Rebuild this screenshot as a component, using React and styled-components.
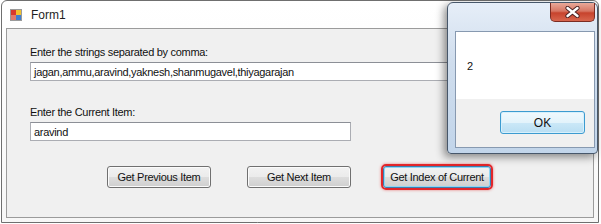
import styled, { createGlobalStyle } from "styled-components";

const GlobalStyle = createGlobalStyle`
  html, body {
    margin: 0;
    padding: 0;
    background: #ffffff;
  }
  body {
    width: 601px;
    height: 224px;
    overflow: hidden;
    font-family: "Liberation Sans", Arial, sans-serif;
  }
`;

const Screen = styled.div`
  position: relative;
  width: 601px;
  height: 224px;
  padding: 0 0 0 1px;
  box-sizing: border-box;
`;

const Window = styled.div`
  width: 598px;
  height: 223px;
  box-sizing: border-box;
  border: 1px solid #6f6f6f;
  border-radius: 6px 6px 0 0;
  background: linear-gradient(#ffffff, #f7f7f7);
  display: flex;
  flex-direction: column;
`;

const TitleBar = styled.div`
  height: 27px;
  display: flex;
  align-items: center;
  gap: 9px;
  padding-left: 8px;
  font-size: 12px;
  color: #1e1e1e;
`;

const Client = styled.div`
  flex: 1;
  margin: 0 4px 4px 4px;
  border: 1px solid #9b9b9b;
  background: #f0f0f0;
  padding: 16px 0 0 23px;
  display: flex;
  flex-direction: column;
  font-size: 11px;
  letter-spacing: -0.3px;
  color: #111;
`;

const Label = styled.div`
  line-height: 15px;
  margin-top: ${(p) => p.$top || 0}px;
`;

const TextBox = styled.div`
  width: ${(p) => p.$width}px;
  height: 19px;
  box-sizing: border-box;
  margin-top: 2px;
  border: 1px solid #abadb3;
  border-top-color: #8c8f96;
  background: #ffffff;
  padding-left: 3px;
  display: flex;
  align-items: center;
  white-space: nowrap;
  overflow: hidden;
`;

const ButtonRow = styled.div`
  display: flex;
  margin: 25px 0 0 77px;
`;

const Button = styled.div`
  width: ${(p) => p.$width}px;
  height: 22px;
  box-sizing: border-box;
  margin-right: ${(p) => p.$gap || 0}px;
  border: 1px solid ${(p) => (p.$focused ? "#3c7fb1" : "#707070")};
  border-radius: 3px;
  background: linear-gradient(#f2f2f2 0%, #ebebeb 50%, #dddddd 51%, #cfcfcf 100%);
  box-shadow: inset 0 0 0 1px ${(p) => (p.$focused ? "#8fd6f5" : "#fbfbfb")};
  display: flex;
  align-items: center;
  justify-content: center;
  position: relative;
`;

const Highlight = styled.div`
  position: absolute;
  inset: -3px;
  border: 2px solid #e2262a;
  border-radius: 5px;
  box-shadow: 0 0 3px rgba(226, 38, 42, 0.6);
  pointer-events: none;
`;

const MessageBox = styled.div`
  position: absolute;
  left: 447px;
  top: 2px;
  width: 151px;
  height: 152px;
  box-sizing: border-box;
  border: 1px solid #47576a;
  border-radius: 6px 6px 4px 4px;
  background: linear-gradient(#e6eef8 0%, #cfdded 40%, #c2d5ea 100%);
  box-shadow: -3px 3px 8px rgba(0, 0, 0, 0.45);
  display: flex;
  flex-direction: column;
  padding: 0 2px 5px 7px;
`;

const MsgTitle = styled.div`
  height: 28px;
  display: flex;
  justify-content: flex-end;
  align-items: flex-start;
`;

const CloseButton = styled.div`
  width: 45px;
  height: 19px;
  box-sizing: border-box;
  border: 1px solid #7b2c22;
  border-top: none;
  border-radius: 0 0 5px 5px;
  background: linear-gradient(#e9a999 0%, #d77663 45%, #c7432d 55%, #d8664e 100%);
  display: flex;
  align-items: center;
  justify-content: center;
`;

const MsgContent = styled.div`
  flex: 1;
  border: 1px solid #8799b0;
  display: flex;
  flex-direction: column;
  font-size: 11px;
  color: #111;
`;

const MsgText = styled.div`
  height: 67px;
  background: #ffffff;
  padding-left: 11px;
  display: flex;
  align-items: center;
`;

const MsgFooter = styled.div`
  flex: 1;
  background: #f0f0f0;
  display: flex;
  justify-content: flex-end;
  align-items: flex-start;
  padding: 12px 9px 0 0;
`;

const OkButton = styled.div`
  width: 85px;
  height: 23px;
  box-sizing: border-box;
  border: 1px solid #3c9bd0;
  border-radius: 3px;
  background: linear-gradient(#f0f9fd 0%, #e3f3fb 50%, #cbe8f7 51%, #b9def3 100%);
  box-shadow: inset 0 0 0 1px #d6f0fc;
  display: flex;
  align-items: center;
  justify-content: center;
  font-size: 12px;
`;

const FormIcon = () => (
  <svg width="12" height="12" viewBox="0 0 12 12">
    <rect x="0.5" y="0.5" width="11" height="11" fill="#f4f4f4" stroke="#9a9a9a" />
    <rect x="1" y="1" width="5" height="5" fill="#d83a2e" />
    <rect x="6" y="1" width="5" height="5" fill="#f2c230" />
    <rect x="1" y="6" width="5" height="5" fill="#e07b6e" />
    <rect x="6" y="6" width="5" height="5" fill="#3f7fd0" />
  </svg>
);

const CloseGlyph = () => (
  <svg width="15" height="12" viewBox="0 0 15 12">
    <path
      d="M2.5 2 L12.5 10 M12.5 2 L2.5 10"
      stroke="#4a2020"
      strokeWidth="4.2"
      strokeLinecap="round"
    />
    <path
      d="M2.5 2 L12.5 10 M12.5 2 L2.5 10"
      stroke="#ffffff"
      strokeWidth="2.4"
      strokeLinecap="round"
    />
  </svg>
);

const App = () => {
  return (
    <Screen>
      <GlobalStyle />
      <Window>
        <TitleBar>
          <FormIcon />
          Form1
        </TitleBar>
        <Client>
          <Label>Enter the strings separated by comma:</Label>
          <TextBox $width={535}>
            jagan,ammu,aravind,yaknesh,shanmugavel,thiyagarajan
          </TextBox>
          <Label $top={24}>Enter the Current Item:</Label>
          <TextBox $width={321}>aravind</TextBox>
          <ButtonRow>
            <Button $width={104} $gap={36}>
              Get Previous Item
            </Button>
            <Button $width={104} $gap={32}>
              Get Next Item
            </Button>
            <Button $width={108} $focused>
              Get Index of Current
              <Highlight />
            </Button>
          </ButtonRow>
        </Client>
      </Window>
      <MessageBox>
        <MsgTitle>
          <CloseButton>
            <CloseGlyph />
          </CloseButton>
        </MsgTitle>
        <MsgContent>
          <MsgText>2</MsgText>
          <MsgFooter>
            <OkButton>OK</OkButton>
          </MsgFooter>
        </MsgContent>
      </MessageBox>
    </Screen>
  );
};

export default App;
